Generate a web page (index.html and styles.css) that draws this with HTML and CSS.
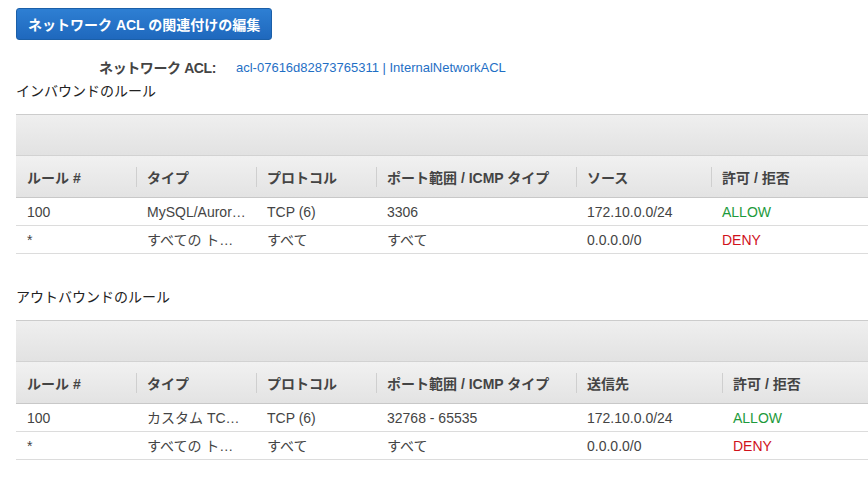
FILE: index.html
```html
<!DOCTYPE html>
<html lang="ja">
<head>
<meta charset="utf-8">
<link rel="stylesheet" href="styles.css">
</head>
<body>
<div class="page">
  <button class="btn">ネットワーク ACL の関連付けの編集</button>
  <div class="acl-row">
    <span class="acl-label">ネットワーク ACL:</span>
    <a class="acl-link">acl-07616d82873765311 | InternalNetworkACL</a>
  </div>
  <h2 class="section-title first">インバウンドのルール</h2>
  <div class="toolbar"></div>
  <table class="rules in">
    <colgroup><col class="c1"><col class="c2"><col class="c3"><col class="c4"><col class="c5"><col></colgroup>
    <thead>
      <tr><th>ルール #</th><th><span class="sep"></span>タイプ</th><th><span class="sep"></span>プロトコル</th><th><span class="sep"></span>ポート範囲 / ICMP タイプ</th><th><span class="sep"></span>ソース</th><th><span class="sep"></span>許可 / 拒否</th></tr>
    </thead>
    <tbody>
      <tr><td>100</td><td>MySQL/Auror…</td><td>TCP (6)</td><td>3306</td><td>172.10.0.0/24</td><td class="allow">ALLOW</td></tr>
      <tr><td>*</td><td>すべての ト…</td><td>すべて</td><td>すべて</td><td>0.0.0.0/0</td><td class="deny">DENY</td></tr>
    </tbody>
  </table>
  <h2 class="section-title">アウトバウンドのルール</h2>
  <div class="toolbar"></div>
  <table class="rules out">
    <colgroup><col class="c1"><col class="c2"><col class="c3"><col class="c4"><col class="c5b"><col></colgroup>
    <thead>
      <tr><th>ルール #</th><th><span class="sep"></span>タイプ</th><th><span class="sep"></span>プロトコル</th><th><span class="sep"></span>ポート範囲 / ICMP タイプ</th><th><span class="sep"></span>送信先</th><th><span class="sep"></span>許可 / 拒否</th></tr>
    </thead>
    <tbody>
      <tr><td>100</td><td>カスタム TC…</td><td>TCP (6)</td><td>32768 - 65535</td><td>172.10.0.0/24</td><td class="allow">ALLOW</td></tr>
      <tr><td>*</td><td>すべての ト…</td><td>すべて</td><td>すべて</td><td>0.0.0.0/0</td><td class="deny">DENY</td></tr>
    </tbody>
  </table>
</div>
</body>
</html>
```

FILE: styles.css
```css
html, body {
  margin: 0;
  padding: 0;
  background: #fff;
}
body {
  font-family: "Liberation Sans", Arial, "Noto Sans CJK JP", sans-serif;
  font-size: 14px;
  color: #444;
}
.page {
  padding: 8px 0 0 16px;
}
.btn {
  display: block;
  height: 32px;
  padding: 0 11px;
  margin: 0;
  border: 1px solid #1b5fa8;
  border-radius: 3px;
  background: linear-gradient(#2e7fd3, #1f68bd);
  color: #fff;
  font-family: inherit;
  font-size: 14px;
  font-weight: bold;
  cursor: pointer;
}
.acl-row {
  display: flex;
  margin-top: 20px;
  line-height: 16px;
}
.acl-label {
  width: 200px;
  text-align: right;
  font-weight: bold;
  color: #444;
  letter-spacing: -0.4px;
}
.acl-link {
  margin-left: 20px;
  color: #1f6fc5;
  font-size: 13px;
}
.section-title {
  margin: 33px 0 0;
  font-size: 14px;
  font-weight: normal;
  line-height: 20px;
  color: #222;
}
.section-title.first {
  margin-top: 5px;
}
.toolbar {
  margin-top: 13px;
  height: 40px;
  border-top: 1px solid #ccc;
  border-bottom: 1px solid #d2d2d2;
  background: linear-gradient(#efefef, #e2e2e2);
}
.rules {
  width: 100%;
  border-collapse: collapse;
  table-layout: fixed;
}
.c1, .c2, .c3 { width: 120px; }
.c4 { width: 200px; }
.c5 { width: 135px; }
.c5b { width: 146px; }
.rules th {
  height: 41px;
  padding: 0 0 0 11px;
  text-align: left;
  font-weight: bold;
  color: #444;
  background: linear-gradient(#f1f1f1, #e3e3e3);
  border-bottom: 1px solid #c8c8c8;
  position: relative;
  white-space: nowrap;
}
.rules th .sep {
  position: absolute;
  left: 0;
  top: 11px;
  height: 20px;
  border-left: 1px solid #cfcfcf;
}
.rules td {
  height: 27px;
  padding: 0 0 0 11px;
  border-bottom: 1px solid #dcdcdc;
  color: #444;
  white-space: nowrap;
  overflow: hidden;
  line-height: 26px;
}
.allow { color: #1d9a3c !important; }
.deny { color: #d0111b !important; }
```
